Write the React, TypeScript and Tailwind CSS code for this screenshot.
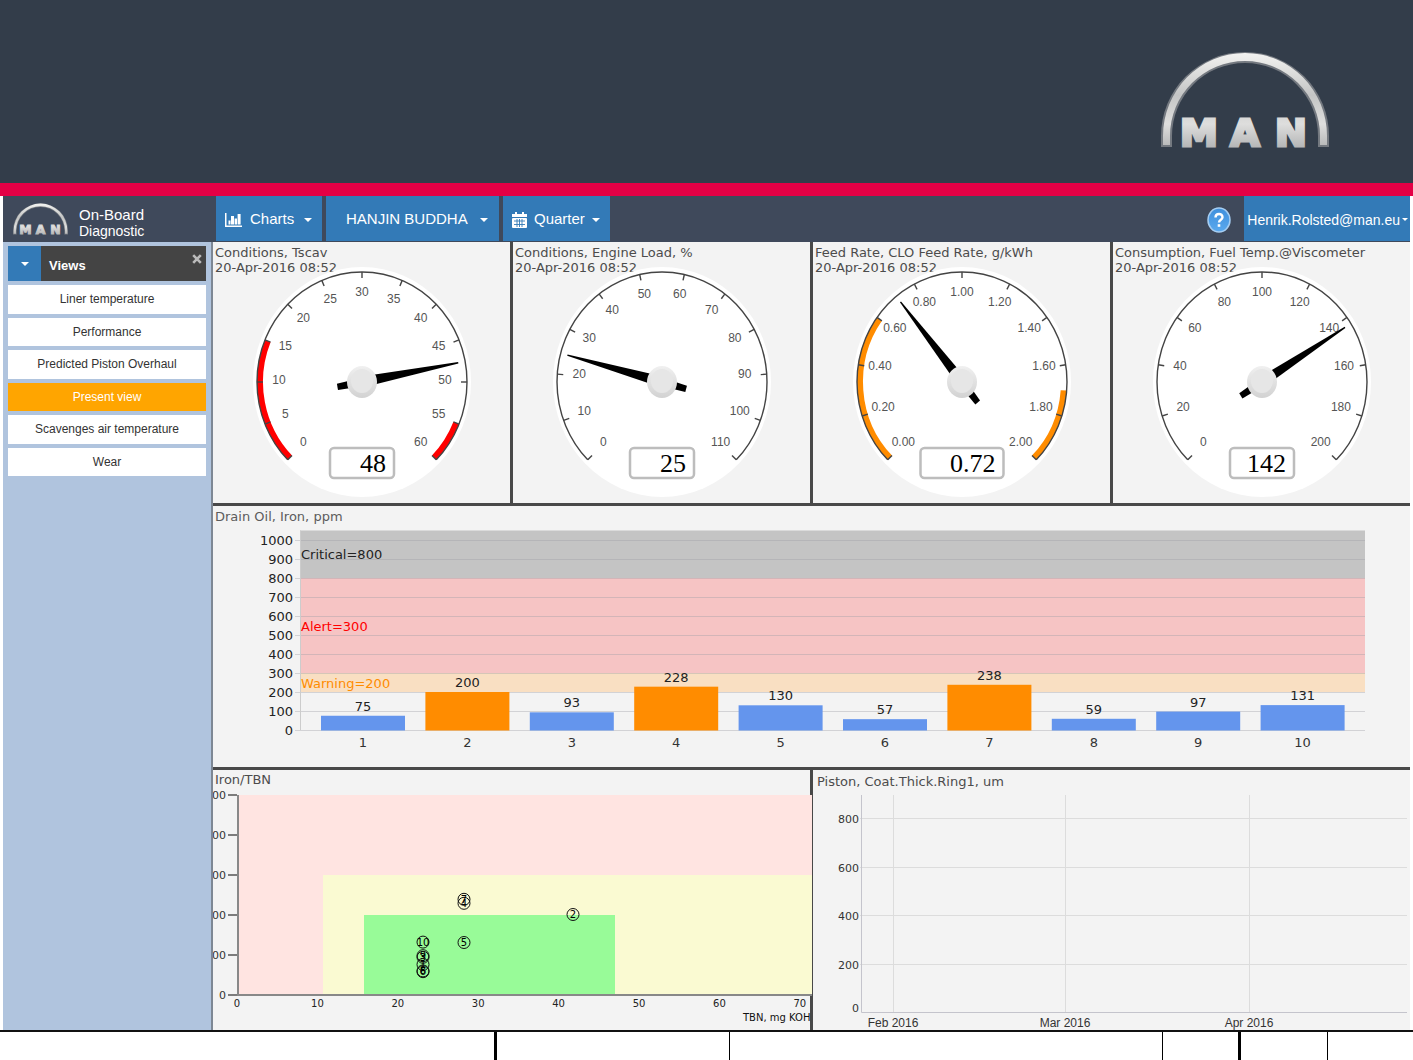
import React from "react";

const SANS = "font-['Liberation_Sans',Arial,sans-serif]";
const CHART_FONT = "font-['DejaVu_Sans',Verdana,sans-serif]";

function ManLogo({ id, className }: { id: string; className: string }) {
  return (
    <svg viewBox="0 0 168 96" className={className} role="img" aria-label="MAN">
      <defs>
        <linearGradient id={id} x1="0" y1="0" x2="0" y2="96" gradientUnits="userSpaceOnUse">
          <stop offset="0" stopColor="#f4f4f2" />
          <stop offset="0.45" stopColor="#c4c5c5" />
          <stop offset="0.75" stopColor="#dededd" />
          <stop offset="1" stopColor="#b4b5b6" />
        </linearGradient>
      </defs>
      <path d="M0 95V84A84 84 0 0 1 168 84V95H157V84A73 73 0 0 0 11 84V95Z" fill="#747980" />
      <path d="M2 93V84A82 83 0 0 1 166 84V93H159V84A75 75 0 0 0 9 84V93Z" fill={`url(#${id})`} />
      <text
        x="38 84 130"
        y="94"
        fontSize="38"
        fontWeight="700"
        textAnchor="middle"
        fill={`url(#${id})`}
        stroke={`url(#${id})`}
        strokeWidth="3"
        className={CHART_FONT}
      >
        MAN
      </text>
    </svg>
  );
}

function Caret() {
  return (
    <svg viewBox="0 0 8 4" className="h-1 w-2 shrink-0" aria-hidden="true">
      <path d="M0 0H8L4 4Z" fill="currentColor" />
    </svg>
  );
}

function StatsIcon() {
  return (
    <svg viewBox="0 0 17 14" className="h-3.5 w-[17px]" aria-hidden="true" fill="currentColor">
      <path d="M0 0H1.5V12.5H17V14H0Z" />
      <rect x="3.5" y="7.5" width="2" height="4" />
      <rect x="6" y="3" width="3" height="8.5" />
      <rect x="9.6" y="5.5" width="2.4" height="6" />
      <rect x="12.6" y="1" width="3" height="10.5" />
    </svg>
  );
}

function CalendarIcon() {
  return (
    <svg viewBox="0 0 15 16" className="h-4 w-[15px]" aria-hidden="true">
      <path d="M3 0H5V2H10V0H12V2H15V5H0V2H3Z" fill="currentColor" />
      <rect x="0" y="6" width="15" height="10" rx="1" fill="currentColor" />
      <path d="M2 9H13M2 12.5H13M5 7V15M7.5 7V15M10 7V15" stroke="#337ab7" strokeWidth="0.9" />
    </svg>
  );
}

function HelpIcon() {
  return (
    <svg viewBox="0 0 24 26" className="h-[26px] w-6" aria-hidden="true">
      <defs>
        <linearGradient id="help" x1="0" y1="0" x2="0" y2="1">
          <stop offset="0" stopColor="#3f8fdc" />
          <stop offset="1" stopColor="#5aa9ee" />
        </linearGradient>
      </defs>
      <ellipse cx="12" cy="13" rx="11" ry="12" fill="url(#help)" stroke="#a5cdf2" strokeWidth="1.5" />
      <path d="M8.5 10.5C8.5 5.8 15.5 5.8 15.5 10.2C15.5 12.8 12 12.6 12 15.6" fill="none" stroke="#fff" strokeWidth="2.4" />
      <rect x="10.7" y="17.2" width="2.6" height="2.6" fill="#fff" />
    </svg>
  );
}

interface GaugeData {
  title: string;
  display: string;
  value: number;
  max: number;
  step: number;
  digits: number;
  boxWidth: number;
  bands: [number, number][];
  bandColor: string;
}

const gauges: GaugeData[] = [
  { title: "Conditions, Tscav", display: "48", value: 47.6, max: 60, step: 5, digits: 0, boxWidth: 64, bands: [[0, 15], [55, 60]], bandColor: "#ff0000" },
  { title: "Conditions, Engine Load, %", display: "25", value: 24.5, max: 110, step: 10, digits: 0, boxWidth: 64, bands: [], bandColor: "" },
  { title: "Feed Rate, CLO Feed Rate, g/kWh", display: "0.72", value: 0.712, max: 2, step: 0.2, digits: 2, boxWidth: 83, bands: [[0, 0.6], [1.7, 2]], bandColor: "#ff8c00" },
  { title: "Consumption, Fuel Temp.@Viscometer", display: "142", value: 142.9, max: 200, step: 20, digits: 0, boxWidth: 64, bands: [], bandColor: "" },
];

const CX = 110;
const CY = 140;

function polar(fraction: number, rx: number, ry: number): [number, number] {
  const a = ((225 - 270 * fraction) * Math.PI) / 180;
  return [CX + rx * Math.cos(a), CY - ry * Math.sin(a)];
}

function arc(from: number, to: number, rx: number, ry: number) {
  const [x1, y1] = polar(from, rx, ry);
  const [x2, y2] = polar(to, rx, ry);
  return `M${x1} ${y1}A${rx} ${ry} 0 ${to - from > 2 / 3 ? 1 : 0} 1 ${x2} ${y2}`;
}

function Gauge({ g, index }: { g: GaugeData; index: number }) {
  const count = Math.round(g.max / g.step);
  const steps = Array.from({ length: count + 1 }, (_, i) => i);
  const a = ((225 - 270 * (g.value / g.max)) * Math.PI) / 180;
  const at = (along: number, across: number) =>
    `${CX + along * Math.cos(a) + across * Math.sin(a)},${CY - 1.05 * (along * Math.sin(a) - across * Math.cos(a))}`;
  const hub = `hub${index}`;
  return (
    <section className="relative flex justify-center bg-[#f3f3f3]">
      <h2 className={`absolute top-[3px] left-0.5 text-[13px] leading-[15px] whitespace-nowrap text-[#4c4c4c] ${CHART_FONT}`}>
        {g.title}
        <br />
        20-Apr-2016 08:52
      </h2>
      <svg viewBox="0 0 220 261" className="relative h-[261px] w-[220px]" role="img" aria-label={`${g.title} ${g.display}`}>
        <defs>
          <linearGradient id={hub} x1="0" y1="0" x2="0" y2="1">
            <stop offset="0" stopColor="#f0f0f0" />
            <stop offset="1" stopColor="#d2d2d2" />
          </linearGradient>
        </defs>
        <ellipse cx={CX} cy={CY} rx="109" ry="115" fill="#fff" />
        {g.bands.map(([from, to]) => (
          <path key={from} d={arc(from / g.max, to / g.max, 102, 107)} fill="none" stroke={g.bandColor} strokeWidth="6" />
        ))}
        <path d={arc(0, 1, 105, 110)} fill="none" stroke="#444" strokeWidth="1.4" />
        {steps.map((i) => {
          const f = i / count;
          const [x1, y1] = polar(f, 105, 110);
          const [x2, y2] = polar(f, 99, 104);
          const [tx, ty] = polar(f, 83, 88);
          return (
            <React.Fragment key={i}>
              <path d={`M${x1} ${y1}L${x2} ${y2}`} stroke="#444" strokeWidth="1.4" />
              <text x={tx} y={ty + 2} fontSize="12" textAnchor="middle" fill="#555" className={SANS}>
                {(i * g.step).toFixed(g.digits)}
              </text>
            </React.Fragment>
          );
        })}
        <rect x={CX - g.boxWidth / 2} y="206" width={g.boxWidth} height="30" rx="4" fill="#fff" stroke="#bdbdbd" strokeWidth="2.5" />
        <text x={CX + g.boxWidth / 2 - 8} y="230" fontSize="26" textAnchor="end" fill="#000" className="font-['Liberation_Serif','Times_New_Roman',serif]">
          {g.display}
        </text>
        <polygon points={[at(-25, -3), at(-25, 3), at(14, 4.5), at(98, 0.7), at(98, -0.7), at(14, -4.5)].join(" ")} fill="#000" />
        <ellipse cx={CX} cy={CY} rx="15" ry="16" fill={`url(#${hub})`} />
        <ellipse cx={CX} cy={CY - 1} rx="11" ry="12" fill="#e6e6e6" />
      </svg>
    </section>
  );
}

const iron = [75, 200, 93, 228, 130, 57, 238, 59, 97, 131];
const barY = (v: number) => 224 - v * 0.19;

function DrainOilChart() {
  return (
    <section className="bg-[#f3f3f3]">
      <svg viewBox="0 0 1197 261" className={`block w-full ${CHART_FONT}`} role="img" aria-label="Drain Oil, Iron, ppm">
        <text x="2" y="15" fontSize="13" fill="#5c5c5c">Drain Oil, Iron, ppm</text>
        <rect x="87" y={barY(1050)} width="1065" height={250 * 0.19} fill="#c4c4c4" />
        <rect x="87" y={barY(800)} width="1065" height={500 * 0.19} fill="#f6c4c4" />
        <rect x="87" y={barY(300)} width="1065" height={100 * 0.19} fill="#f9dfc2" />
        {Array.from({ length: 11 }, (_, i) => i * 100).map((v) => (
          <React.Fragment key={v}>
            <path d={`M82 ${barY(v) + 0.5}H1152`} stroke="#a0a0a8" strokeOpacity="0.4" />
            <text x="80" y={barY(v) + 5} fontSize="13" textAnchor="end" fill="#222">{v}</text>
          </React.Fragment>
        ))}
        <path d={`M87.5 ${barY(1050)}V224`} stroke="#ccc" />
        <text x="88" y="53" fontSize="13" fill="#222">Critical=800</text>
        <text x="88" y="125" fontSize="13" fill="#f00">Alert=300</text>
        <text x="88" y="182" fontSize="13" fill="#ff8c00">Warning=200</text>
        {iron.map((v, i) => {
          const x = 150 + i * 104.4;
          return (
            <React.Fragment key={i}>
              <rect x={x - 42} y={barY(v)} width="84" height={v * 0.19 + 0.5} fill={v >= 200 ? "#ff8c00" : "#6495ed"} />
              <text x={x} y={barY(v) - 5} fontSize="13" textAnchor="middle" fill="#222">{v}</text>
              <text x={x} y="241" fontSize="13" textAnchor="middle" fill="#333">{i + 1}</text>
            </React.Fragment>
          );
        })}
      </svg>
    </section>
  );
}

const samples: { n: number; x: number; v: number }[] = [
  { n: 4, x: 251, v: 228 },
  { n: 7, x: 251, v: 238 },
  { n: 2, x: 360, v: 200 },
  { n: 5, x: 251, v: 130 },
  { n: 10, x: 210, v: 131 },
  { n: 9, x: 210, v: 97 },
  { n: 3, x: 210, v: 93 },
  { n: 1, x: 210, v: 75 },
  { n: 8, x: 210, v: 59 },
  { n: 6, x: 210, v: 57 },
];

function ScatterChart() {
  return (
    <section className="bg-[#f3f3f3]">
      <svg viewBox="0 0 599 260" className={`relative block w-[calc(100%+2px)] max-w-none ${CHART_FONT}`} role="img" aria-label="Iron/TBN">
        <text x="2" y="14" fontSize="13" fill="#4c4c4c">Iron/TBN</text>
        <rect x="25" y="25" width="574" height="200" fill="#ffe4e1" />
        <rect x="110" y="105" width="489" height="120" fill="#fafad2" />
        <rect x="151" y="145" width="251" height="80" fill="#98fb98" />
        <path d="M25 25V225H599" fill="none" stroke="#888" strokeWidth="2" />
        {[0, 100, 200, 300, 400, 500].map((v) => (
          <React.Fragment key={v}>
            <path d={`M15 ${225 - v * 0.4}H24`} stroke="#555" strokeWidth="1.5" />
            <text x="13" y={229 - v * 0.4} fontSize="11" textAnchor="end" fill="#333">{v}</text>
          </React.Fragment>
        ))}
        {[0, 10, 20, 30, 40, 50, 60, 70].map((v) => (
          <text key={v} x={24 + v * 8.04} y="237" fontSize="10" textAnchor="middle" fill="#222">{v}</text>
        ))}
        <text x="530" y="251" fontSize="10" fill="#111">TBN, mg KOH</text>
        {samples.map((s) => (
          <g key={s.n}>
            <circle cx={s.x} cy={224.5 - s.v * 0.4} r="6" fill="none" stroke="#111" strokeWidth="1" />
            <text x={s.x} y={228 - s.v * 0.4} fontSize="10" textAnchor="middle" fill="#000">{s.n}</text>
          </g>
        ))}
      </svg>
    </section>
  );
}

function PistonChart() {
  return (
    <section className="bg-[#f3f3f3]">
      <svg viewBox="0 0 597 260" className={`block w-full ${CHART_FONT}`} role="img" aria-label="Piston, Coat.Thick.Ring1, um">
        <text x="4" y="16" fontSize="13" fill="#4c4c4c">Piston, Coat.Thick.Ring1, um</text>
        {[200, 400, 600, 800].map((v) => (
          <React.Fragment key={v}>
            <path d={`M47 ${Math.round(242 - v * 0.2425) + 0.5}H594`} stroke="#dcdcdc" />
            <text x="46" y={247 - v * 0.2425} fontSize="11" textAnchor="end" fill="#333">{v}</text>
          </React.Fragment>
        ))}
        <text x="46" y="242" fontSize="11" textAnchor="end" fill="#333">0</text>
        <path d="M80.5 25V242M252.5 25V242M436.5 25V242" stroke="#dcdcdc" />
        <path d="M48.5 25V242.5H594" fill="none" stroke="#c4c4cc" />
        <text x="80" y="257" fontSize="12" textAnchor="middle" fill="#333" className={SANS}>Feb 2016</text>
        <text x="252" y="257" fontSize="12" textAnchor="middle" fill="#333" className={SANS}>Mar 2016</text>
        <text x="436" y="257" fontSize="12" textAnchor="middle" fill="#333" className={SANS}>Apr 2016</text>
      </svg>
    </section>
  );
}

const views = ["Liner temperature", "Performance", "Predicted Piston Overhaul", "Present view", "Scavenges air temperature", "Wear"];

function Sidebar() {
  return (
    <aside className="w-[210px] shrink-0 border-r-2 border-[#7d8794] bg-[#b0c4de] px-[5px] pt-1">
      <div className="flex h-[35px] bg-[#444] text-white">
        <button type="button" aria-label="Toggle views" className="flex w-[33px] items-center justify-center bg-[#337ab7]">
          <Caret />
        </button>
        <h2 className="flex flex-1 items-center pt-1 pl-2 text-[13px] font-bold">Views</h2>
        <button type="button" aria-label="Close views" className="mt-2 mr-1 h-2.5 w-2.5 text-[#bbb]">
          <svg viewBox="0 0 10 10" className="h-2.5 w-2.5">
            <path d="M1.2 1.2L8.8 8.8M8.8 1.2L1.2 8.8" stroke="currentColor" strokeWidth="2.6" />
          </svg>
        </button>
      </div>
      <nav className="mt-1 grid h-[191px] auto-rows-fr gap-1">
        {views.map((v) => (
          <button
            key={v}
            type="button"
            className={v === "Present view" ? "bg-[#ffa500] text-xs text-white" : "bg-white text-xs text-[#333]"}
          >
            {v}
          </button>
        ))}
      </nav>
    </aside>
  );
}

export default function App() {
  return (
    <div className={`flex min-h-screen flex-col bg-white ${SANS}`}>
      <header className="flex h-[196px] justify-end border-b-[13px] border-[#e40045] bg-[#333d4a] pt-[52px] pr-[84px]">
        <ManLogo id="metal" className="h-24 w-[168px]" />
      </header>

      <div className="mx-[3px]">
        <div className="flex h-[46px] items-stretch bg-[#3f495b] pb-px text-[15px] text-white">
          <div className="flex w-[213px] shrink-0 items-center gap-[11px] pl-2.5">
            <ManLogo id="metalSmall" className="h-8 w-[55px]" />
            <div className="pt-2 leading-4">
              On-Board
              <br />
              <span className="text-sm leading-4">Diagnostic</span>
            </div>
          </div>
          <div className="flex gap-1">
            <button type="button" className="flex w-[106px] items-center bg-[#337ab7] pt-0.5 pl-[9px]">
              <StatsIcon />
              <span className="mr-2.5 ml-2">Charts</span>
              <Caret />
            </button>
            <button type="button" className="flex w-[173px] items-center gap-3 bg-[#337ab7] pt-0.5 pl-5">
              HANJIN BUDDHA
              <Caret />
            </button>
            <button type="button" className="flex w-[107px] items-center gap-[7px] bg-[#337ab7] pt-0.5 pl-[9px]">
              <CalendarIcon />
              Quarter
              <Caret />
            </button>
          </div>
          <button type="button" aria-label="Help" className="mr-[13px] ml-auto flex items-center pt-0.5">
            <HelpIcon />
          </button>
          <button type="button" className="flex w-[166px] items-center justify-end gap-0.5 bg-[#337ab7] pt-0.5 pr-0.5 text-sm">
            Henrik.Rolsted@man.eu
            <svg viewBox="0 0 6 3" className="h-[3px] w-1.5" aria-hidden="true">
              <path d="M0 0H6L3 3Z" fill="currentColor" />
            </svg>
          </button>
        </div>

        <div className="flex">
          <Sidebar />
          <main className="grid min-w-0 flex-1 gap-[3px] bg-[#484848]">
            <div className="grid grid-cols-4 gap-[3px]">
              {gauges.map((g, i) => (
                <Gauge key={g.title} g={g} index={i} />
              ))}
            </div>
            <DrainOilChart />
            <div className="grid grid-cols-2 gap-[3px]">
              <ScatterChart />
              <PistonChart />
            </div>
          </main>
        </div>
      </div>

      <footer className="grid flex-1 grid-cols-[497fr_233fr_433fr_78fr_87fr_85fr] border-t-2 border-[#111]">
        <div className="border-r-[3px] border-black" />
        <div className="border-r border-black" />
        <div className="border-r border-black" />
        <div className="border-r-[3px] border-black" />
        <div className="border-r border-black" />
        <div />
      </footer>
    </div>
  );
}
